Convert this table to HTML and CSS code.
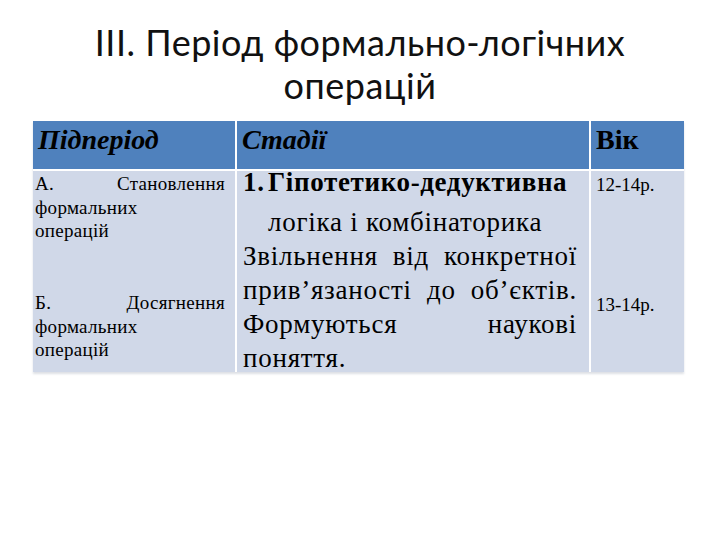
FILE: index.html
```html
<!DOCTYPE html>
<html lang="uk">
<head>
<meta charset="utf-8">
<title>III. Період формально-логічних операцій</title>
<link rel="stylesheet" href="styles.css">
</head>
<body>
<div class="slide">
  <h1 class="title">III. Період формально-логічних<br>операцій</h1>
  <div class="table">
    <div class="th th-it">Підперіод</div>
    <div class="th th-it">Стадії</div>
    <div class="th">Вік</div>

    <div class="td col1">
      <div class="sub">
        <div class="jl">А. Становлення</div>
        <div>формальних</div>
        <div>операцій</div>
      </div>
      <div class="sub sub-b">
        <div class="jl">Б. Досягнення</div>
        <div>формальних</div>
        <div>операцій</div>
      </div>
    </div>

    <div class="td col2">
      <div class="l-first"><span class="num">1.</span>Гіпотетико-дедуктивна</div>
      <div class="l-line l-indent">логіка і комбінаторика</div>
      <div class="l-line jl">Звільнення від конкретної</div>
      <div class="l-line jl">прив’язаності до об’єктів.</div>
      <div class="l-line jl">Формуються наукові</div>
      <div class="l-line">поняття.</div>
    </div>

    <div class="td col3">
      <div class="age">12-14р.</div>
      <div class="age age-b">13-14р.</div>
    </div>
  </div>
</div>
</body>
</html>
```

FILE: styles.css
```css
html, body {
  margin: 0;
  padding: 0;
  background: #ffffff;
}

.slide {
  width: 720px;
  height: 540px;
  padding-top: 21px;
  box-sizing: border-box;
  color: #000;
}

.title {
  margin: 0;
  font-family: "Lato", "Liberation Sans", sans-serif;
  font-weight: normal;
  font-size: 36px;
  letter-spacing: 0.5px;
  line-height: 43px;
  text-align: center;
  color: #111;
}

.table {
  margin: 14px 0 0 33px;
  width: 651px;
  display: grid;
  grid-template-columns: 202px 352px 93px;
  grid-template-rows: 48px 201px;
  gap: 2px;
  font-family: "Liberation Serif", "Times New Roman", serif;
  box-shadow: 0 2px 2px rgba(120, 130, 150, 0.25);
}

.th {
  background: #4f81bd;
  font-weight: bold;
  font-size: 28px;
  line-height: 31px;
  padding: 3px 0 0 5px;
  box-sizing: border-box;
}

.th-it {
  font-style: italic;
}

.td {
  background: #d0d8e8;
  box-sizing: border-box;
}

.jl {
  text-align: justify;
  text-align-last: justify;
}

.col1 {
  font-size: 19px;
  line-height: 23.5px;
  letter-spacing: 0.3px;
  padding: 1px 10px 0 2px;
}

.sub-b {
  margin-top: 48.5px;
}

.col2 {
  font-size: 27px;
  letter-spacing: 0.75px;
  padding: 0 12px 0 6px;
}

.l-first {
  font-weight: bold;
  letter-spacing: 0.65px;
  line-height: 22px;
  height: 22px;
  margin-bottom: 12px;
  white-space: nowrap;
}

.num {
  display: inline-block;
  width: 25px;
}

.l-line {
  line-height: 34px;
  height: 34px;
  white-space: nowrap;
}

.l-indent {
  padding-left: 25px;
}

.col3 {
  font-size: 19px;
  line-height: 23.5px;
  padding: 2px 0 0 5px;
}

.age-b {
  margin-top: 96.5px;
}
```
